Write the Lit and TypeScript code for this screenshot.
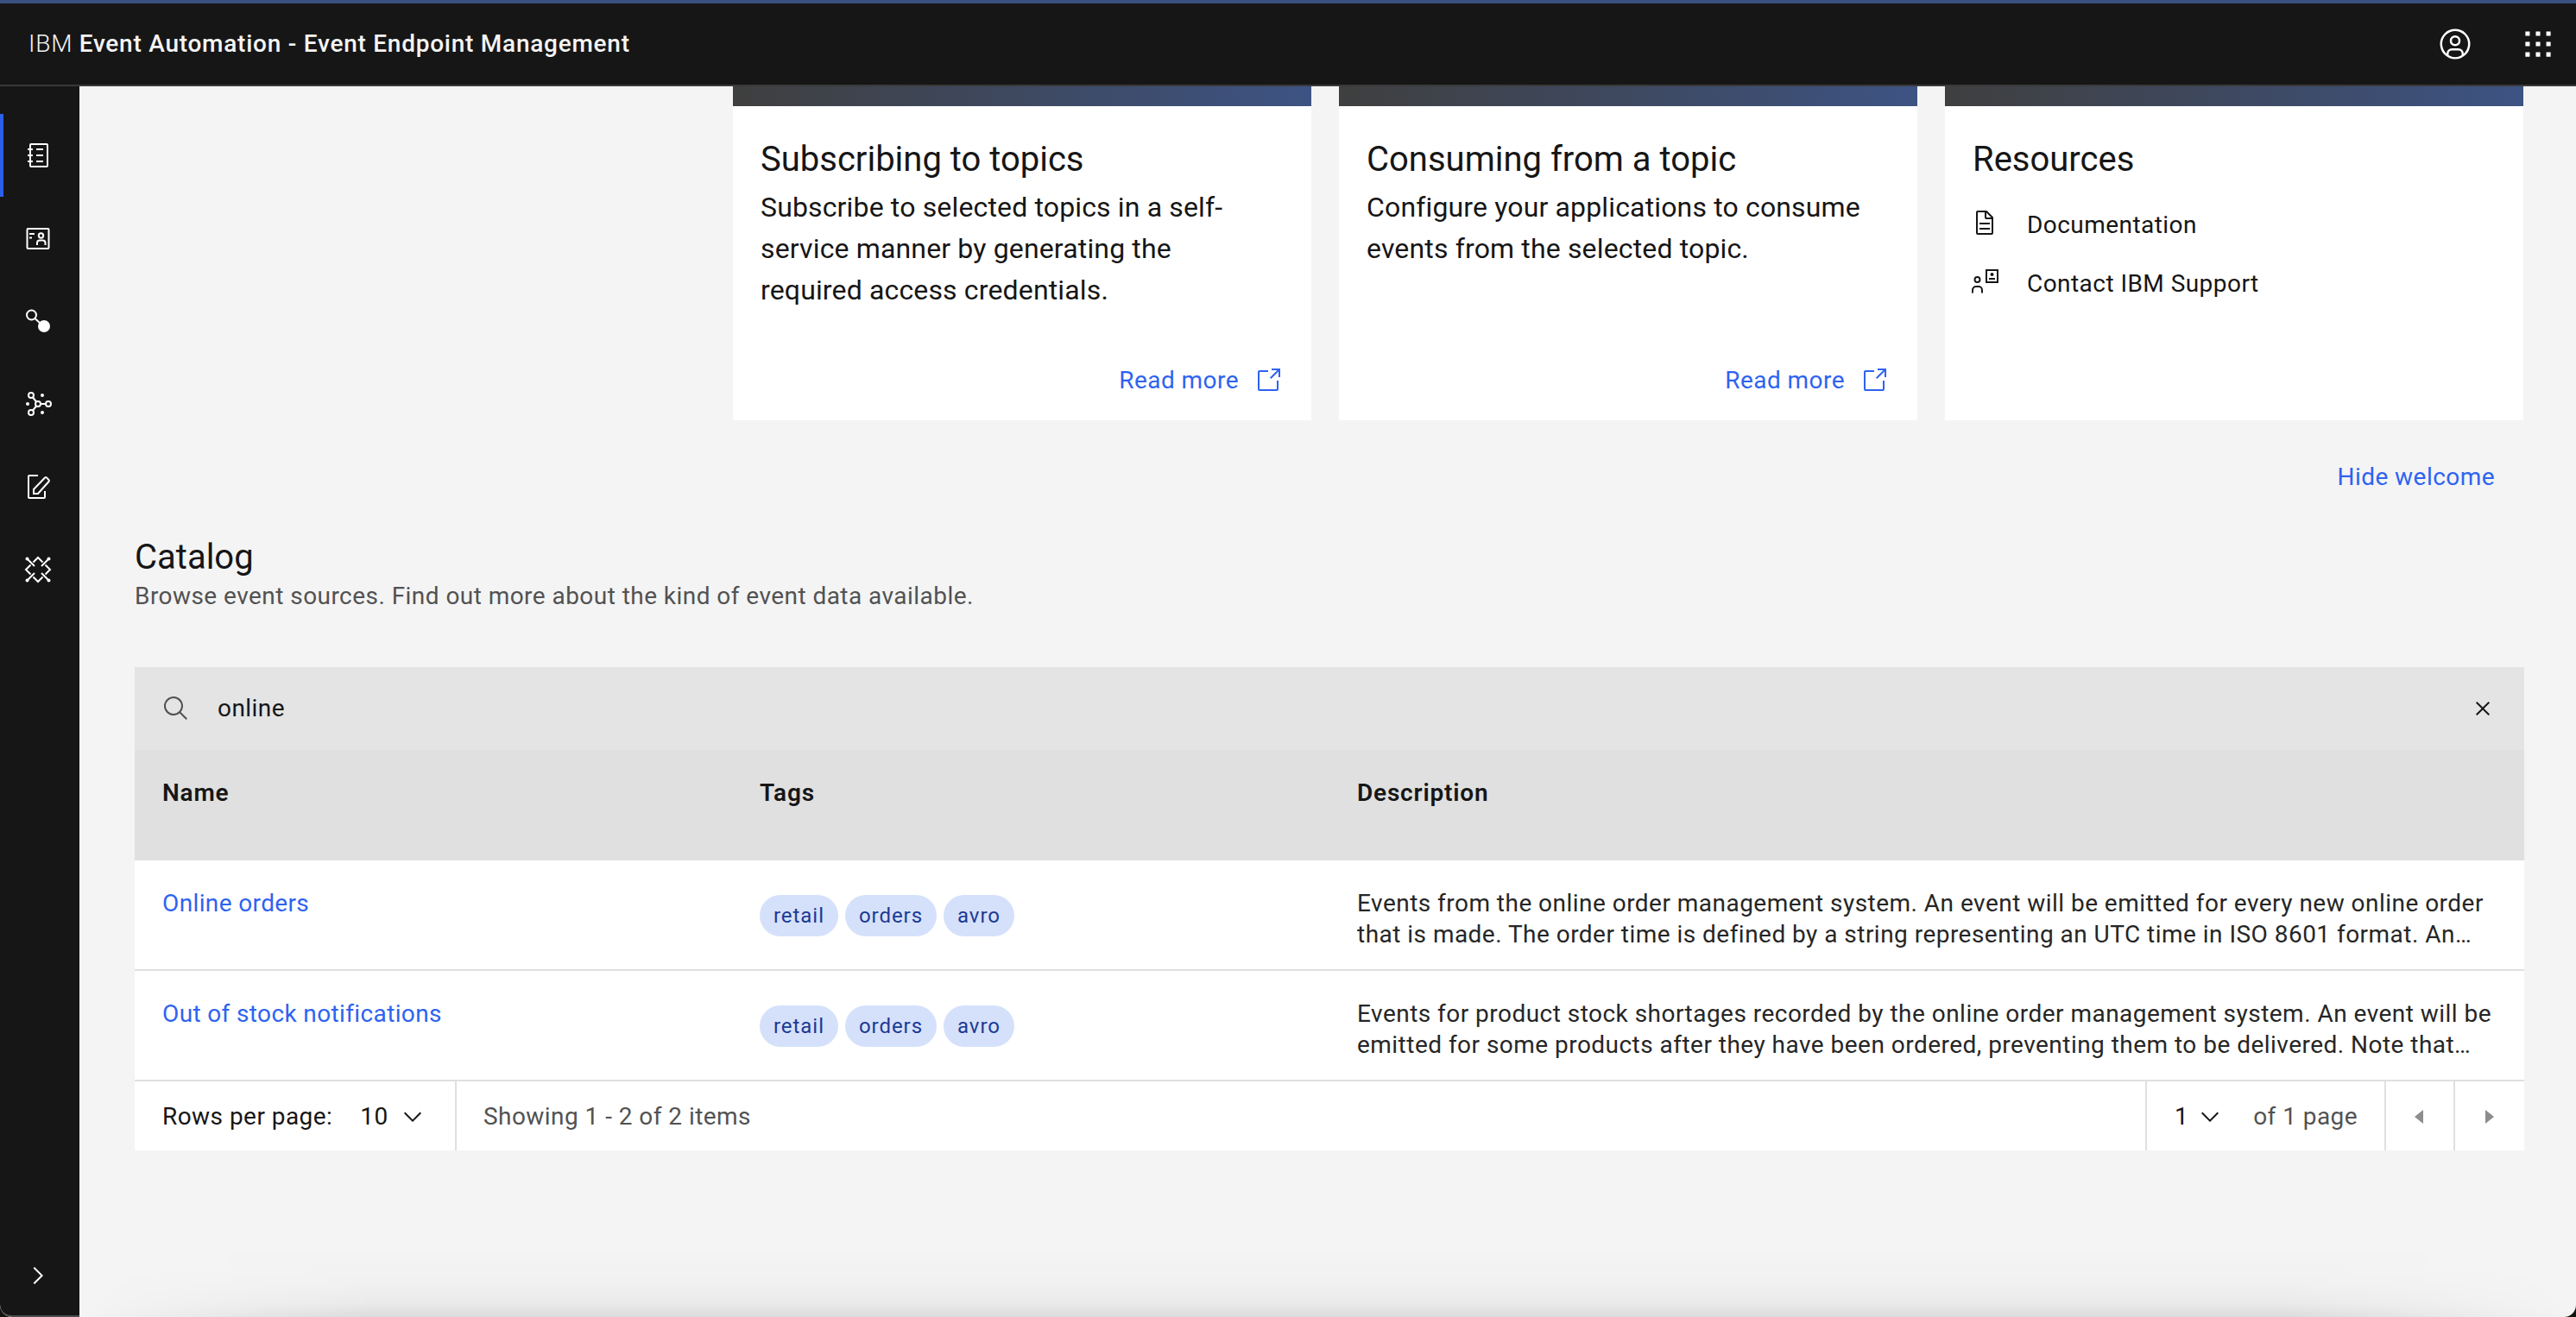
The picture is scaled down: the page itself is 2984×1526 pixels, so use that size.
import { LitElement, html, css, svg } from "lit";
import { customElement } from "lit/decorators.js";

const icon = (size: number, body: unknown, cls = "") =>
  html`<svg class="ic ${cls}" width=${size} height=${size} viewBox="0 0 32 32" fill="currentColor">${body}</svg>`;

const I = {
  catalog: svg`<path d="M26,2H8A2,2,0,0,0,6,4V8H4v2H6v5H4v2H6v5H4v2H6v4a2,2,0,0,0,2,2H26a2,2,0,0,0,2-2V4A2,2,0,0,0,26,2Zm0,26H8V24h2V22H8V17h2V15H8V10h2V8H8V4H26Z"/><path d="M14 8h8v2h-8zM14 15h8v2h-8zM14 22h8v2h-8z"/>`,
  card: svg`<rect x="3.5" y="5" width="25" height="23" rx="1" fill="none" stroke="currentColor" stroke-width="2"/><path d="M6 10h6v2H6zM6 14.5h3v2H6z"/><circle cx="19.5" cy="13" r="2.7" fill="none" stroke="currentColor" stroke-width="2"/><path d="M15 24v-2.5a3 3 0 0 1 3-3h3.500a3 3 0 0 1 3 3V24" fill="none" stroke="currentColor" stroke-width="2"/>`,
  nodes: svg`<circle cx="8.500" cy="9" r="5.500" fill="none" stroke="currentColor" stroke-width="2"/><circle cx="23" cy="22" r="7"/><path d="M12.500 13l6 5.500" stroke="currentColor" stroke-width="2"/>`,
  net: svg`<g fill="none" stroke="currentColor" stroke-width="2"><circle cx="16" cy="16" r="3"/><circle cx="28" cy="16" r="3"/><circle cx="8" cy="6" r="3"/><circle cx="8" cy="26" r="3"/><path d="M19 16h6M10 8.500l4.500 5.500M10 23.500l4.500-5.500"/></g><circle cx="4" cy="16" r="2"/><circle cx="21" cy="6" r="2"/><circle cx="21" cy="26" r="2"/>`,
  edit: svg`<g fill="none" stroke="currentColor" stroke-width="2"><path d="M16 3H6a1 1 0 0 0-1 1v24a1 1 0 0 0 1 1h17a1 1 0 0 0 1-1v-7"/><path d="M11 24v-5L24 5.500a1.500 1.500 0 0 1 2 0l2.500 2.500a1.500 1.500 0 0 1 0 2L16 24z"/></g>`,
  api: svg`<g fill="none" stroke="currentColor" stroke-width="2"><path d="M10.500 7.500L16 2l5.500 5.500M24.500 10.500L30 16l-5.500 5.500M21.500 24.500L16 30l-5.500-5.500M7.500 21.500L2 16l5.500-5.500"/><path d="M4 4l8 8M28 4l-8 8M4 28l8-8M28 28l-8-8"/></g><circle cx="3.500" cy="3.500" r="2"/><circle cx="28.500" cy="3.500" r="2"/><circle cx="3.500" cy="28.500" r="2"/><circle cx="28.500" cy="28.500" r="2"/>`,
  chevRight: svg`<path d="M22 16L12 26l-1.400-1.400 8.600-8.600-8.600-8.600L12 6z"/>`,
  chevDown: svg`<path d="M16 22L6 12l1.400-1.400 8.600 8.600 8.600-8.600L26 12z"/>`,
  user: svg`<path d="M16,8a5,5,0,1,0,5,5A5,5,0,0,0,16,8Zm0,8a3,3,0,1,1,3-3A3,3,0,0,1,16,16Z"/><path d="M16,2A14,14,0,1,0,30,16,14.0158,14.0158,0,0,0,16,2ZM10,26.3765V25a3.0033,3.0033,0,0,1,3-3h6a3.0033,3.0033,0,0,1,3,3v1.3765a11.8989,11.8989,0,0,1-12,0Zm13.9925-1.4507A5.0016,5.0016,0,0,0,19,20H13a5.0016,5.0016,0,0,0-4.9925,4.9258,12,12,0,1,1,15.985,0Z"/>`,
  switcher: svg`<path d="M3 3h4.500v4.500H3zM13.750 3h4.500v4.500h-4.500zM24.500 3H29v4.500h-4.500zM3 13.750h4.500v4.500H3zM13.750 13.750h4.500v4.500h-4.500zM24.500 13.750H29v4.500h-4.500zM3 24.500h4.500V29H3zM13.750 24.500h4.500V29h-4.500zM24.500 24.500H29V29h-4.500z"/>`,
  launch: svg`<path d="M26,28H6a2.0027,2.0027,0,0,1-2-2V6A2.0027,2.0027,0,0,1,6,4H16V6H6V26H26V16h2V26A2.0027,2.0027,0,0,1,26,28Z"/><path d="M20 2v2h6.586L18 12.586 19.414 14 28 5.414V12h2V2H20z"/>`,
  doc: svg`<path d="M25.7,9.3l-7-7A.9087.9087,0,0,0,18,2H8A2.0058,2.0058,0,0,0,6,4V28a2.0058,2.0058,0,0,0,2,2H24a2.0058,2.0058,0,0,0,2-2V10A.9092.9092,0,0,0,25.7,9.3ZM18,4.400,23.600,10H18ZM24,28H8V4h8v6a2.0058,2.0058,0,0,0,2,2h6Z"/><path d="M10 22h12v2H10zM10 16h12v2H10z"/>`,
  contact: svg`<g fill="none" stroke="currentColor" stroke-width="2"><circle cx="7.500" cy="14" r="3"/><path d="M2 29.500V26a4 4 0 0 1 4-4h3a4 4 0 0 1 4 4v3.500"/><rect x="18" y="3" width="13" height="14"/></g><circle cx="24.500" cy="8" r="2"/><path d="M21 12h7v2h-7z"/>`,
  search: svg`<path d="M29,27.5859l-7.5521-7.5521a11.0177,11.0177,0,1,0-1.4141,1.4141L27.5859,29ZM4,13a9,9,0,1,1,9,9A9.01,9.01,0,0,1,4,13Z"/>`,
  close: svg`<path d="M24 9.400L22.600 8 16 14.600 9.400 8 8 9.400 14.600 16 8 22.600 9.400 24 16 17.400 22.600 24 24 22.600 17.400 16 24 9.400z"/>`,
  caretL: svg`<path d="M20 24l-10-8 10-8z"/>`,
  caretR: svg`<path d="M12 8l10 8-10 8z"/>`,
};

const rows = [
  {
    name: "Online orders",
    desc: "Events from the online order management system. An event will be emitted for every new online order that is made. The order time is defined by a string representing an UTC time in ISO 8601 format. An event will also include customer details and the ordered products.",
  },
  {
    name: "Out of stock notifications",
    desc: "Events for product stock shortages recorded by the online order management system. An event will be emitted for some products after they have been ordered, preventing them to be delivered. Note that the stock level is reported for each of the affected products in turn.",
  },
];

@customElement("app-root")
export class AppRoot extends LitElement {
  static styles = css`
    :host {
      display: block;
      position: relative;
      height: 1526px;
      overflow: hidden;
      background: #14140c;
      font-family: Roboto, "Liberation Sans", sans-serif;
      color: #161616;
      font-size: 28px;
      line-height: 36px;
      letter-spacing: 0.45px;
    }
    .win {
      height: 100%;
      display: flex;
      flex-direction: column;
      position: relative;
      overflow: hidden;
      background: #f4f4f4;
      border-radius: 0 0 14px 14px;
    }
    .ic { display: block; flex: none; }
    a { color: #2e63f0; text-decoration: none; }
    .top {
      flex: none;
      height: 94px;
      background: #161616;
      border-top: 4px solid #3a5080;
      border-bottom: 2px solid #393939;
      display: flex;
      align-items: center;
      color: #f4f4f4;
      padding-left: 33px;
    }
    .brand { font-weight: 300; letter-spacing: 0.75px; }
    .brand b { font-weight: 500; }
    .top-actions { margin-left: auto; display: flex; align-items: center; gap: 58px; margin-right: 26px; color: #fff; }
    .body { flex: 1; display: flex; min-height: 0; }
    .side {
      flex: none;
      width: 92px;
      background: #161616;
      color: #fff;
      padding-top: 32px;
      display: flex;
      flex-direction: column;
      box-sizing: border-box;
      border-bottom: 2px solid #4c4c4c;
      border-bottom-left-radius: 14px;
    }
    .nav { height: 96px; display: flex; align-items: center; justify-content: center; padding-right: 4px; }
    .nav.on { box-shadow: inset 4px 0 #2d5fe8; }
    .spacer { flex: 1; }
    .expand { height: 62px; display: flex; justify-content: center; padding-right: 4px; }
    .main { flex: 1; min-width: 0; padding: 0 60px 0 64px; }
    .cards { display: grid; grid-template-columns: repeat(3, 670px); gap: 32px; justify-content: end; padding-right: 1px; }
    .card { background: #fff; height: 387px; display: flex; flex-direction: column; }
    .banner { height: 23px; background: linear-gradient(90deg, #3f3f3f, #3d5383); flex: none; }
    .card-body { flex: 1; padding: 38px 34px 28px 32px; display: flex; flex-direction: column; }
    h3 { margin: 0; font-size: 40px; line-height: 48px; font-weight: 400; letter-spacing: 0; }
    .card p { margin: 7px 0 0; font-size: 32px; line-height: 48px; letter-spacing: 0.15px; max-width: 585px; }
    .more { margin-top: auto; display: flex; justify-content: flex-end; align-items: center; gap: 18px; }
    .res { display: flex; align-items: center; gap: 33px; height: 68px; margin-left: -2px; }
    .res .ic { margin-bottom: 6px; }
    .res-list { margin-top: 18px; }
    .hide { display: flex; justify-content: flex-end; padding: 48px 34px 0 0; }
    .cat-title { margin: 51px 0 0; font-size: 40px; line-height: 48px; font-weight: 400; letter-spacing: 0; }
    .cat-sub { color: #525252; margin-top: 3px; }
    .table { margin-top: 64px; background: #fff; }
    .search { height: 96px; background: #e4e4e4; display: flex; align-items: center; padding: 0 32px; gap: 32px; }
    .search .s { color: #525252; }
    .search .x { margin-left: auto; }
    .grid { display: grid; grid-template-columns: 692px 692px 1fr; }
    .grid > div { padding: 32px 32px 0; box-sizing: border-box; }
    .th { background: #e0e0e0; height: 126px; font-weight: 600; letter-spacing: 0.8px; }
    .hline { grid-column: 1 / -1; height: 2px; background: #e0e0e0; padding: 0 !important; }
    .td { height: 126px; }
    .td a { letter-spacing: 0.37px; }
    .tags { display: flex; gap: 8px; padding-top: 40px !important; }
    .tag { height: 48px; display: flex; align-items: center; padding: 0 16px; border-radius: 24px; background: #d5e1fb; color: #1c3a94; font-size: 24px; letter-spacing: 0.95px; }
    .grid > .desc { color: #262626; letter-spacing: 0.47px; padding-right: 37px; }
    .clamp { display: -webkit-box; -webkit-line-clamp: 2; -webkit-box-orient: vertical; overflow: hidden; }
    .foot { height: 80px; display: flex; align-items: stretch; width: 2766px; }
    .foot > div { display: flex; align-items: center; padding-top: 2px; }
    .f1 { width: 373px; padding-left: 32px; box-sizing: border-box; border-right: 2px solid #e0e0e0; }
    .f1 .v { margin-left: 32px; margin-right: 12px; }
    .f2 { flex: 1; padding-left: 31px; color: #525252; }
    .f3 { width: 277px; box-sizing: border-box; border-left: 2px solid #e0e0e0; padding-left: 32px; }
    .f3 .o { color: #525252; margin-left: 34px; }
    .f3 .c { margin-left: 9px; }
    .nb { width: 80px; box-sizing: border-box; border-left: 2px solid #e0e0e0; justify-content: center; color: #8d8d8d; }
    .shade {
      position: absolute;
      left: 92px;
      right: 0;
      bottom: 0;
      height: 80px;
      background: linear-gradient(180deg, rgba(0, 0, 0, 0), rgba(0, 0, 0, 0.012) 50%, rgba(0, 0, 0, 0.04) 80%, rgba(0, 0, 0, 0.1));
      -webkit-mask-image: linear-gradient(90deg, transparent, #000 12%, #000 88%, transparent);
      mask-image: linear-gradient(90deg, transparent, #000 12%, #000 88%, transparent);
      pointer-events: none;
    }
  `;

  render() {
    return html`
      <div class="win">
        <header class="top">
          <span class="brand">IBM <b>Event Automation - Event Endpoint Management</b></span>
          <div class="top-actions">${icon(40, I.user)}${icon(36, I.switcher)}</div>
        </header>
        <div class="body">
          <nav class="side">
            <div class="nav on">${icon(32, I.catalog)}</div>
            <div class="nav">${icon(32, I.card)}</div>
            <div class="nav">${icon(32, I.nodes)}</div>
            <div class="nav">${icon(32, I.net)}</div>
            <div class="nav">${icon(32, I.edit)}</div>
            <div class="nav">${icon(32, I.api)}</div>
            <div class="spacer"></div>
            <div class="expand">${icon(32, I.chevRight)}</div>
          </nav>
          <main class="main">
            <section class="cards">
              <article class="card">
                <div class="banner"></div>
                <div class="card-body">
                  <h3>Subscribing to topics</h3>
                  <p>Subscribe to selected topics in a self-service manner by generating the required access credentials.</p>
                  <a class="more" href="#">Read more ${icon(32, I.launch)}</a>
                </div>
              </article>
              <article class="card">
                <div class="banner"></div>
                <div class="card-body">
                  <h3>Consuming from a topic</h3>
                  <p>Configure your applications to consume events from the selected topic.</p>
                  <a class="more" href="#">Read more ${icon(32, I.launch)}</a>
                </div>
              </article>
              <article class="card">
                <div class="banner"></div>
                <div class="card-body">
                  <h3>Resources</h3>
                  <div class="res-list">
                    <div class="res">${icon(32, I.doc)}<span>Documentation</span></div>
                    <div class="res">${icon(32, I.contact)}<span>Contact IBM Support</span></div>
                  </div>
                </div>
              </article>
            </section>
            <div class="hide"><a href="#">Hide welcome</a></div>
            <h2 class="cat-title">Catalog</h2>
            <div class="cat-sub">Browse event sources. Find out more about the kind of event data available.</div>
            <section class="table">
              <div class="search">
                ${icon(32, I.search, "s")}<span>online</span>${icon(32, I.close, "x")}
              </div>
              <div class="grid">
                <div class="th">Name</div>
                <div class="th">Tags</div>
                <div class="th">Description</div>
                <div class="hline"></div>
                ${rows.map(
                  (r) => html`
                    <div class="td"><a href="#">${r.name}</a></div>
                    <div class="td tags">
                      <span class="tag">retail</span><span class="tag">orders</span><span class="tag">avro</span>
                    </div>
                    <div class="td desc"><div class="clamp">${r.desc}</div></div>
                    <div class="hline"></div>
                  `
                )}
              </div>
              <div class="foot">
                <div class="f1">Rows per page:<span class="v">10</span>${icon(32, I.chevDown)}</div>
                <div class="f2">Showing 1 - 2 of 2 items</div>
                <div class="f3">1<span class="c">${icon(32, I.chevDown)}</span><span class="o">of 1 page</span></div>
                <div class="nb">${icon(32, I.caretL)}</div>
                <div class="nb">${icon(32, I.caretR)}</div>
              </div>
            </section>
          </main>
        </div>
        <div class="shade"></div>
      </div>
    `;
  }
}
